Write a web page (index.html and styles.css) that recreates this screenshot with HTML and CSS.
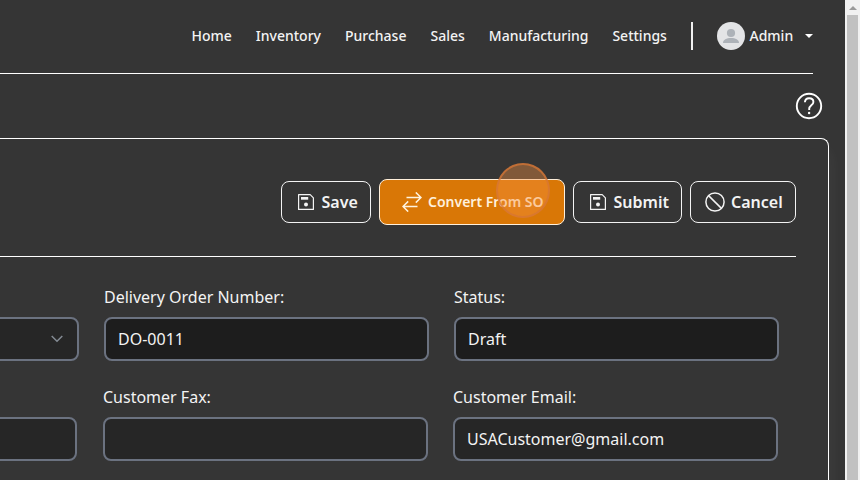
FILE: index.html
```html
<!DOCTYPE html>
<html lang="en">
<head>
<meta charset="utf-8">
<title>Delivery Order</title>
<link rel="stylesheet" href="styles.css">
</head>
<body>
<div class="window">
  <div class="page">
    <header class="navbar">
      <nav class="links">
        <a>Home</a><a>Inventory</a><a>Purchase</a><a>Sales</a><a>Manufacturing</a><a>Settings</a>
      </nav>
      <div class="user">
        <svg class="avatar" viewBox="0 0 28 28"><circle cx="14" cy="14" r="14" fill="#e3e4e6"/><circle cx="14" cy="11" r="4.100" fill="#adb2b8"/><path d="M6 21c0-3.300 3.500-5 8-5s8 1.700 8 5z" fill="#adb2b8"/></svg>
        <span>Admin</span>
        <i class="caret"></i>
      </div>
    </header>
    <div class="help">
      <svg viewBox="0 0 28 28" fill="none" stroke="#fff"><circle cx="14" cy="14" r="12.200" stroke-width="1.900"/><path d="M9.900 10.300C10.100 7.600 11.800 6.200 14.100 6.200c2.600 0 4.300 1.500 4.300 3.700 0 3.300-4.200 3.500-4.200 6.900v1.300" stroke-width="1.900"/><circle cx="14.100" cy="21" r="1.200" fill="#fff" stroke="none"/></svg>
    </div>
    <main class="panel">
      <div class="toolbar">
        <button class="btn save"><svg class="disk" viewBox="0 0 16 16" fill="none" stroke="#f3f3f3"><path d="M.6.6h11.600l3.200 3.200v11.600H.6z" stroke-width="1.200" stroke-linejoin="round"/><path d="M3 3h7.200v2.700H3z" fill="#f3f3f3" stroke="none"/><circle cx="8" cy="10.500" r="2" fill="#f3f3f3" stroke="none"/></svg>Save</button>
        <button class="btn convert"><svg class="swap" viewBox="0 0 20 20" fill="none" stroke="#fff3df" stroke-width="1.500"><path d="M4.500 5.500H19M13.800.4L19 5.500l-5.200 5.100M15.500 14.500H1M6.200 9.400L1 14.500l5.200 5.100"/></svg>Convert From SO<span class="pointer"></span></button>
        <button class="btn submit"><svg class="disk" viewBox="0 0 16 16" fill="none" stroke="#f3f3f3"><path d="M.6.6h11.600l3.200 3.200v11.600H.6z" stroke-width="1.200" stroke-linejoin="round"/><path d="M3 3h7.200v2.700H3z" fill="#f3f3f3" stroke="none"/><circle cx="8" cy="10.500" r="2" fill="#f3f3f3" stroke="none"/></svg>Submit</button>
        <button class="btn cancel"><svg class="ban" viewBox="0 0 20 20" fill="none" stroke="#f3f3f3" stroke-width="1.500"><circle cx="10" cy="10" r="9.100"/><path d="M3.600 3.600l12.800 12.800"/></svg>Cancel</button>
      </div>
      <div class="row first">
        <div class="field"><label>&nbsp;</label><div class="box select"><svg viewBox="0 0 12 8" fill="none" stroke="#848b94" stroke-width="1.500"><path d="M.7 1l5.300 5.300L11.300 1"/></svg></div></div>
        <div class="field"><label>Delivery Order Number:</label><div class="box locked">DO-0011</div></div>
        <div class="field"><label>Status:</label><div class="box locked">Draft</div></div>
      </div>
      <div class="row second">
        <div class="field"><label>&nbsp;</label><div class="box"></div></div>
        <div class="field"><label>Customer Fax:</label><div class="box"></div></div>
        <div class="field"><label>Customer Email:</label><div class="box">USACustomer@gmail.com</div></div>
      </div>
    </main>
  </div>
  <div class="scrollbar"><i class="up"></i><div class="thumb"></div></div>
</div>
</body>
</html>
```
FILE: styles.css
```css
* { box-sizing: border-box; }
body { margin: 0; background: #353535; color: #f3f3f3; font: 16px/24px "Noto Sans", sans-serif; }
.window { display: flex; width: 860px; height: 480px; overflow: hidden; }
.page { width: 845px; height: 480px; overflow: hidden; }
svg { display: block; flex: none; }

.navbar { display: flex; align-items: center; justify-content: space-between; height: 74px; width: 813px; padding: 0 0 2px 191.5px; border-bottom: 1px solid #fff; font-size: 14px; font-weight: 500; }
.links { display: flex; gap: 24px; }
.user { display: flex; align-items: center; height: 28px; width: 122px; padding-left: 24px; border-left: 2px solid #f0f0f0; }
.avatar { width: 28px; height: 28px; margin-right: 4.5px; }
.caret { margin-left: auto; border: 4.5px solid transparent; border-top-color: #fff; border-bottom: 0; }

.help { display: flex; justify-content: flex-end; height: 64px; padding: 18px 22px 0 0; }
.help svg { width: 28px; height: 28px; }

.panel { width: 829px; height: 400px; border: solid #fff; border-width: 1px 1px 0 0; border-top-right-radius: 8px; box-shadow: 2px 12px 14px rgba(255,255,255,.05); }
.toolbar { display: flex; justify-content: flex-end; align-items: center; gap: 8px; width: 796px; height: 118px; padding-top: 8px; border-bottom: 1px solid #fff; }
.btn { display: flex; align-items: center; height: 42px; padding: 0; border: 1px solid #f3f3f3; border-radius: 8px; background: none; color: #f3f3f3; font: 600 16px/24px "Noto Sans", sans-serif; white-space: nowrap; }
.save { width: 90px; padding-left: 16px; gap: 7.5px; }
.submit { width: 109px; padding-left: 16px; gap: 7.5px; }
.cancel { width: 106px; padding-left: 14px; gap: 6px; }
.convert { position: relative; width: 186px; height: 46px; padding-left: 22px; gap: 6px; background: #d97706; border-color: #fff0dc; color: #fff0dc; font-size: 14px; }
.disk { width: 16px; height: 16px; }
.swap, .ban { width: 20px; height: 20px; }
.pointer { position: absolute; left: 115.5px; top: -17px; width: 54px; height: 55px; border: 2px solid rgba(213,118,53,.75); border-radius: 50%; background: rgba(246,144,66,.4); }

.row { display: grid; grid-template-columns: repeat(3, 325px); gap: 25px; }
.first { margin: 28px 0 0 -246px; }
.second { grid-template-columns: 324px 325px 325px; column-gap: 25px; margin: 24px 0 0 -247px; }
.second .field:first-child { margin-right: 0; }
.second .field + .field { margin: 0 -1px 0 1px; }
.field label { display: block; height: 24px; margin-bottom: 8px; }
.box { display: flex; align-items: center; height: 44px; padding: 0 12px; border: 2px solid #6b7280; border-radius: 8px; background: #262626; }
.locked { background: #1d1d1d; }
.select { justify-content: flex-end; padding-right: 14px; }
.select svg { width: 12px; height: 8px; }

.scrollbar { display: flex; flex-direction: column; align-items: center; width: 15px; padding-top: 6px; background: #f1f1f1; }
.up { border: 4px solid transparent; border-bottom-color: #9a9a9a; border-top: 0; }
.thumb { width: 11px; flex: 1; margin-top: 5px; background: #c1c1c1; }
```
